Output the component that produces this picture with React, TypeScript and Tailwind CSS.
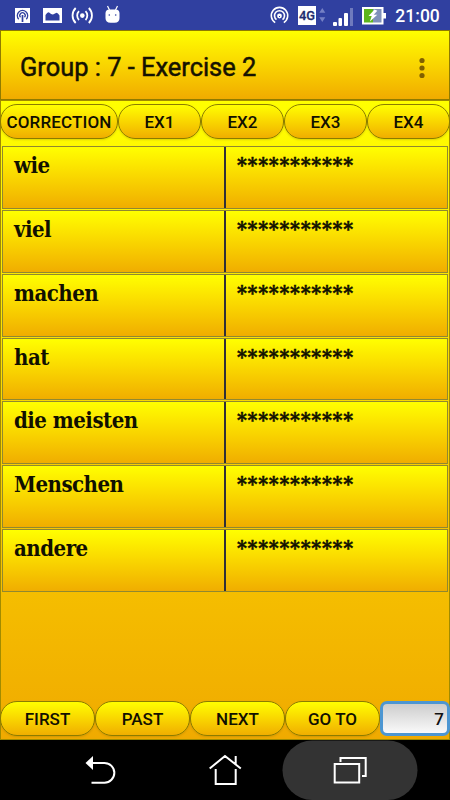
import React from 'react';

const words = ['wie', 'viel', 'machen', 'hat', 'die meisten', 'Menschen', 'andere'];
const exercises = ['EX1', 'EX2', 'EX3', 'EX4'];
const pager = ['FIRST', 'PAST', 'NEXT', 'GO TO'];

function StatusBar() {
  return (
    <div className="flex h-[30px] shrink-0 bg-[#3040a0]">
      <svg width="450" height="30" viewBox="0 0 450 30" fill="none">
        <rect x="15" y="8" width="15" height="15" fill="#fff" />
        <g stroke="#3040a0" strokeWidth="1.3">
          <path d="M18.7 19.2a5.2 5.2 0 1 1 7.6 0M20.5 17.3a2.7 2.7 0 1 1 4 0" />
          <path d="M22.5 15v7" strokeWidth="1.7" />
        </g>
        <rect x="43" y="8" width="19" height="15" fill="#fff" />
        <path d="M45.5 20.500v-5.500q2.500-4 4-2.200t3.500 1.700l3.500-1.700q1.500 0 3 2.700v5z" fill="#3040a0" />
        <g stroke="#fff" strokeWidth="1.8">
          <path d="M79 11.200a6.200 6.200 0 0 0 0 8.800M85.500 11.200a6.200 6.200 0 0 1 0 8.800" />
          <path d="M75.700 8a10.500 10.500 0 0 0 0 15M88.800 8a10.500 10.500 0 0 1 0 15" />
        </g>
        <circle cx="82.300" cy="15.600" r="2.300" fill="#fff" />
        <path d="M105.500 13.500q0-4 4-4h6q4 0 4 4v4.500q0 4.700-5 4.700h-4q-5 0-5-4.700z" fill="#fff" />
        <path d="M107.500 6l2 4M117.500 6l-2 4" stroke="#fff" strokeWidth="1.200" />
        <circle cx="109.300" cy="15" r="0.800" fill="#3040a0" />
        <circle cx="115.700" cy="15" r="0.800" fill="#3040a0" />

        <g stroke="#fff" strokeWidth="1.600">
          <path d="M275.200 22.600a8.200 8.200 0 1 1 8.600 0" />
          <path d="M276.500 19.700a5 5 0 1 1 6 0" />
        </g>
        <circle cx="279.500" cy="16" r="2.400" fill="#fff" />
        <path d="M279.500 16v1" stroke="#3040a0" />
        <rect x="298" y="6" width="18" height="19" fill="#fff" />
        <text x="299" y="20" fontSize="13.500" textLength="16" lengthAdjust="spacingAndGlyphs" fontWeight="500" fill="#202c70" stroke="#202c70" strokeWidth="0.300" className="font-['Roboto',sans-serif]">4G</text>
        <path d="M319.300 12.700l3-4.700 3 4.700zM319.300 17.300l3 4.700 3-4.700z" fill="#7580c5" />
        <rect x="333" y="22" width="4" height="4" rx="1" fill="#fff" />
        <rect x="338.500" y="18" width="3.500" height="8" rx="1" fill="#fff" />
        <rect x="344" y="13" width="4" height="13" rx="1" fill="#fff" />
        <rect x="350" y="8" width="3" height="18" fill="#6f7abd" />
        <rect x="363" y="8" width="19" height="15.500" fill="#7f90ba" />
        <rect x="363" y="8" width="10" height="15.500" fill="#5db51c" />
        <rect x="363" y="8" width="19.500" height="15.500" stroke="#fff" strokeWidth="2" />
        <rect x="383" y="13" width="3" height="5.500" fill="#fff" />
        <path d="M374.500 9.500l-6 6.500h3.200l-1.800 5.500 7.400-6.800h-3.600l3.600-4z" fill="#fff" />
        <text x="395.300" y="22.200" fontSize="17.500" fontWeight="500" textLength="44.500" fill="#fff" className="font-['Roboto',sans-serif]">21:00</text>
      </svg>
    </div>
  );
}

function PillButton({ label, className }: { label: string; className: string }) {
  return (
    <button
      className={`flex shrink-0 items-center justify-center whitespace-nowrap rounded-[17px] border border-[#8b7c00] bg-linear-to-b from-[#ffff00] to-[#f0ae00] pt-[2px] text-[17px] font-medium text-[#111000] shadow-[0_1px_2px_#80600040] ${className}`}
    >
      {label}
    </button>
  );
}

function WordRow({ word }: { word: string }) {
  return (
    <div className="flex min-h-0 flex-1 border border-[#908830] bg-linear-to-b from-[#ffff00] to-[#f0ad00] font-['DejaVu_Serif_Condensed','DejaVu_Serif',serif] font-bold text-[#111000]">
      <div className="w-[223px] shrink-0 border-r-2 border-[#303038] pl-[11px] pt-[4px] text-[22px] leading-[28px] tracking-[-0.5px]">
        {word}
      </div>
      <div className="pl-[11px] pt-[4px] text-[21px] leading-[28px] tracking-[0.75px] [-webkit-text-stroke:0.5px_#111000]">***********</div>
    </div>
  );
}

export default function App() {
  return (
    <div className="flex h-[800px] w-[450px] flex-col overflow-hidden bg-black font-['Roboto',sans-serif]">
      <StatusBar />
      <header className="flex h-[70px] shrink-0 items-center justify-between border border-[#8f7b00] bg-linear-to-b from-[#ffff00] to-[#f0ab00] pl-[19px] pr-[24px] pt-[3px]">
        <h1 className="text-[25.4px] leading-[32px] text-[#151200] [-webkit-text-stroke:0.5px_#151200]">Group : 7 - Exercise 2</h1>
        <svg className="mt-[3px]" width="6" height="22" viewBox="0 0 6 22" fill="#806000">
          <circle cx="3" cy="3.5" r="2.6" />
          <circle cx="3" cy="11" r="2.6" />
          <circle cx="3" cy="18.5" r="2.6" />
        </svg>
      </header>
      <main className="flex h-[640px] shrink-0 flex-col border border-[#a18b00] bg-linear-to-b from-[#ffff00] to-[#f0aa00]">
        <div className="-mx-px mt-[3px] flex h-[35px] shrink-0">
          <PillButton label="CORRECTION" className="w-[118px] tracking-[0.15px]" />
          {exercises.map((label) => (
            <PillButton key={label} label={label} className="w-[83px]" />
          ))}
        </div>
        <div className="ml-[1px] mt-[7px] flex h-[446px] w-[446px] shrink-0 flex-col gap-px">
          {words.map((word) => (
            <WordRow key={word} word={word} />
          ))}
        </div>
        <div className="-mx-px mb-[3px] mt-auto flex h-[35px] shrink-0">
          {pager.map((label) => (
            <PillButton key={label} label={label} className="w-[95px]" />
          ))}
          <div className="flex w-[70px] shrink-0 items-center justify-end rounded-[7px] border-[3px] border-[#4c96d2] bg-linear-to-b from-[#cdcdcd] to-[#fafafa] pr-[3px] pt-[2px] text-[17px] font-medium text-[#111]">
            7
          </div>
        </div>
      </main>
      <nav className="flex h-[60px] shrink-0">
        <svg width="450" height="60" viewBox="0 0 450 60" fill="none" stroke="#fff" strokeWidth="2">
          <rect x="282.500" y="0.500" width="135" height="59.500" rx="29.750" fill="#333" stroke="none" />
          <path d="M92 23h12.500a9.800 9.800 0 0 1 0 19.700H91.500" />
          <path d="M85.500 23l7.500-7v14z" fill="#fff" stroke="none" />
          <path d="M209.700 28.500L225 16l15.800 12.500M215.700 29v15h20V29M235.700 24v-8" />
          <rect x="334.700" y="24" width="24.500" height="18.500" />
          <path d="M340.500 22v-4h25.200v18H362" />
        </svg>
      </nav>
    </div>
  );
}
